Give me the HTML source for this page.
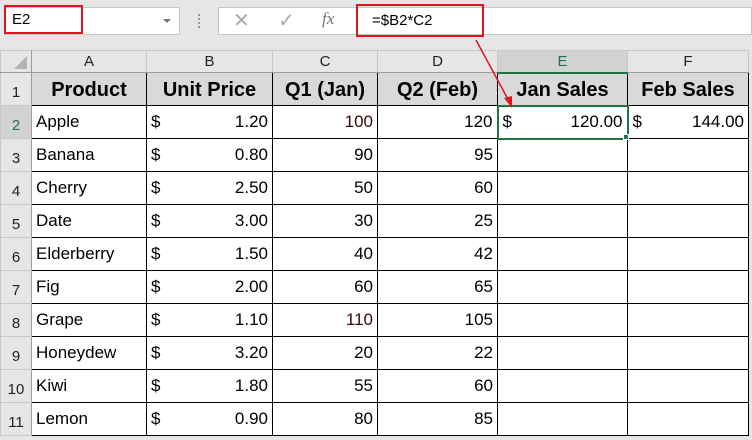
<!DOCTYPE html><html><head><style>
*{margin:0;padding:0;box-sizing:border-box}
body{width:752px;height:440px;background:#e6e6e6;font-family:"Liberation Sans",Arial,sans-serif;position:relative;overflow:hidden}
.a{position:absolute}
table{position:absolute;left:0;top:50px;border-collapse:collapse;table-layout:fixed;width:748px}
td{height:33px;border:1px solid #000;font-size:17px;padding:0 4px;white-space:nowrap;background:#fff;overflow:hidden}
tr.ch td{height:22px;background:#e6e6e6;border:1px solid #c8c8c8;text-align:center;font-size:15px;color:#222;border-bottom:1px solid #9c9c9c}
td.rh{background:#e6e6e6;border:1px solid #c8c8c8;border-right:1px solid #9c9c9c;text-align:center;font-size:15px;color:#222;padding:6px 0 0}
tr.h td.c{background:#d9d9d9;font-weight:bold;font-size:20px;text-align:center;padding-top:2px}
.r{text-align:right}
.d{display:flex;justify-content:space-between}
</style></head><body>
<div class="a" style="left:4px;top:7px;width:176px;height:28px;background:#fff;border:1px solid #c6c6c6"></div>
<div class="a" style="left:4px;top:5px;width:79px;height:29px;border:2px solid #e0141e"></div>
<div class="a" style="left:12px;top:11px;font-size:15px">E2</div>
<div class="a" style="left:163px;top:19px;width:0;height:0;border-left:4px solid transparent;border-right:4px solid transparent;border-top:4px solid #777"></div>
<div class="a" style="left:198px;top:14px;width:3px;height:14px;border-left:2px dotted #999"></div>
<div class="a" style="left:218px;top:7px;width:534px;height:28px;background:#fff;border:1px solid #c6c6c6"></div>
<div class="a" style="left:233px;top:8px;font-size:20px;color:#aaa">✕</div>
<div class="a" style="left:278px;top:8px;font-size:20px;color:#aaa">✓</div>
<div class="a" style="left:322px;top:9px;font-size:17px;color:#777;font-style:italic;font-family:'Liberation Serif',serif">fx</div>
<div class="a" style="left:356px;top:4px;width:128px;height:33px;border:2px solid #e0141e"></div>
<div class="a" style="left:372px;top:12px;font-size:15px">=$B2*C2</div>
<table>
<colgroup><col style="width:31px"><col style="width:115px"><col style="width:126px"><col style="width:105px"><col style="width:120px"><col style="width:130px"><col style="width:121px"></colgroup>
<tr class="ch"><td style="border-right:1px solid #9c9c9c"></td><td>A</td><td>B</td><td>C</td><td>D</td><td style="background:#d2d2d2;color:#217346;border-bottom:2px solid #217346">E</td><td>F</td></tr>
<tr class="h"><td class="rh">1</td><td class="c">Product</td><td class="c">Unit Price</td><td class="c">Q1 (Jan)</td><td class="c">Q2 (Feb)</td><td class="c">Jan Sales</td><td class="c">Feb Sales</td></tr>
<tr><td class="rh" style="background:#d2d2d2;color:#217346">2</td><td>Apple</td><td><div class="d"><span>$</span><span>1.20</span></div></td><td class="r" style="color:#3a0808">100</td><td class="r">120</td><td style="border:2px solid #217346"><div class="d"><span>$</span><span>120.00</span></div></td><td><div class="d"><span>$</span><span>144.00</span></div></td></tr>
<tr><td class="rh">3</td><td>Banana</td><td><div class="d"><span>$</span><span>0.80</span></div></td><td class="r">90</td><td class="r">95</td><td></td><td></td></tr>
<tr><td class="rh">4</td><td>Cherry</td><td><div class="d"><span>$</span><span>2.50</span></div></td><td class="r">50</td><td class="r">60</td><td></td><td></td></tr>
<tr><td class="rh">5</td><td>Date</td><td><div class="d"><span>$</span><span>3.00</span></div></td><td class="r">30</td><td class="r">25</td><td></td><td></td></tr>
<tr><td class="rh">6</td><td>Elderberry</td><td><div class="d"><span>$</span><span>1.50</span></div></td><td class="r">40</td><td class="r">42</td><td></td><td></td></tr>
<tr><td class="rh">7</td><td>Fig</td><td><div class="d"><span>$</span><span>2.00</span></div></td><td class="r">60</td><td class="r">65</td><td></td><td></td></tr>
<tr><td class="rh">8</td><td>Grape</td><td><div class="d"><span>$</span><span>1.10</span></div></td><td class="r" style="color:#3a0808">110</td><td class="r">105</td><td></td><td></td></tr>
<tr><td class="rh">9</td><td>Honeydew</td><td><div class="d"><span>$</span><span>3.20</span></div></td><td class="r">20</td><td class="r">22</td><td></td><td></td></tr>
<tr><td class="rh">10</td><td>Kiwi</td><td><div class="d"><span>$</span><span>1.80</span></div></td><td class="r">55</td><td class="r">60</td><td></td><td></td></tr>
<tr><td class="rh">11</td><td>Lemon</td><td><div class="d"><span>$</span><span>0.90</span></div></td><td class="r">80</td><td class="r">85</td><td></td><td></td></tr>
</table>
<div class="a" style="left:14px;top:56px;width:0;height:0;border-left:13px solid transparent;border-bottom:13px solid #b4b4b4"></div>
<div class="a" style="left:623px;top:134px;width:6px;height:6px;background:#217346;border:1px solid #fff"></div>
<svg class="a" style="left:0;top:0" width="752" height="440"><line x1="476" y1="40" x2="510" y2="103" stroke="#e0141e" stroke-width="1.5"/><polygon points="512,108 504,98 512,96" fill="#e0141e"/></svg>
</body></html>
